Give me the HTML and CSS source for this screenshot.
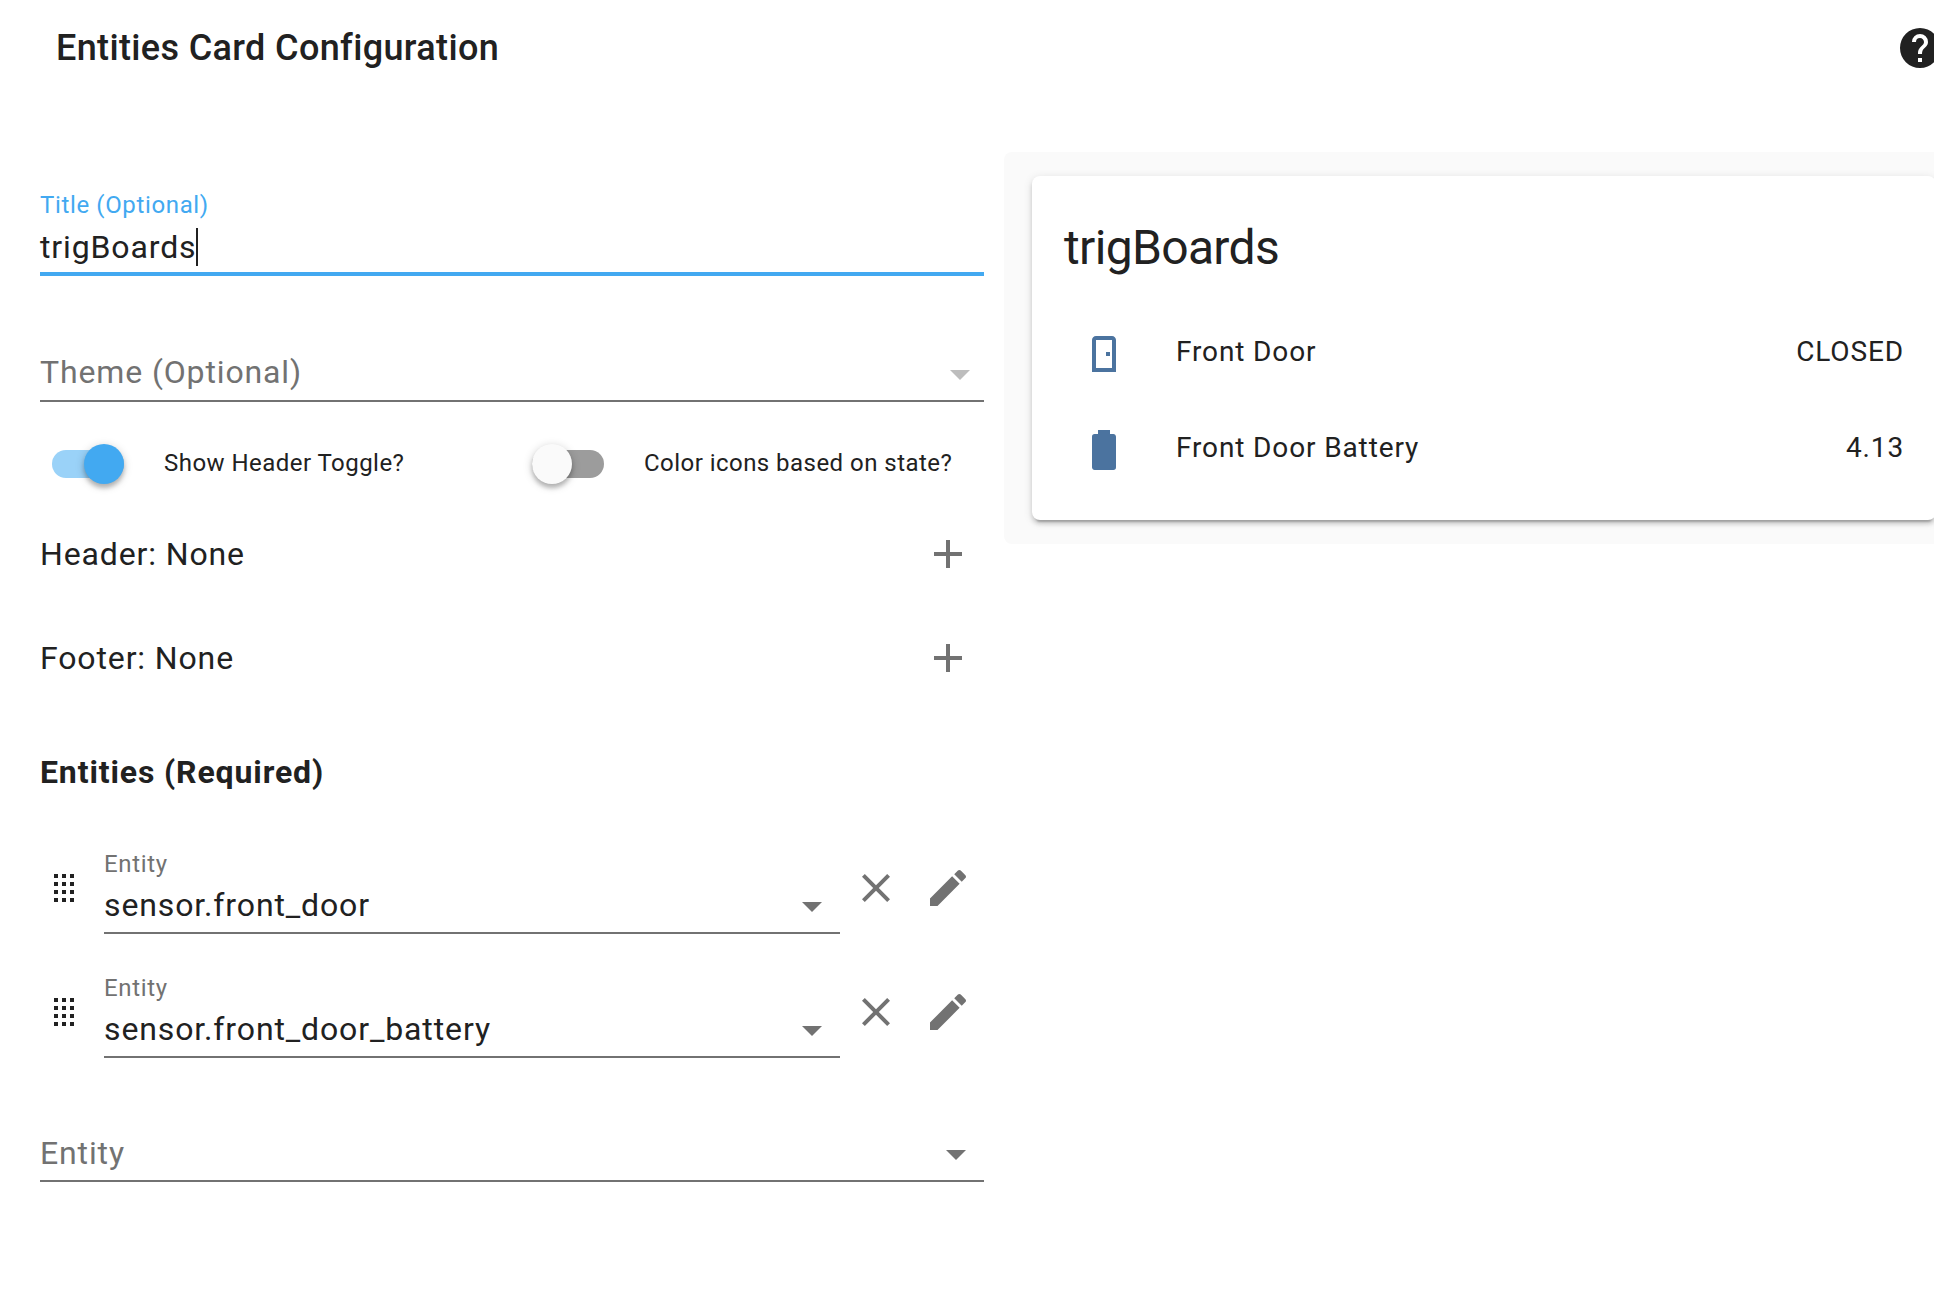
FILE: index.html
```html
<!DOCTYPE html>
<html lang="en">
<head>
<meta charset="utf-8">
<title>Entities Card Configuration</title>
<link rel="stylesheet" href="styles.css">
</head>
<body>
<header class="dialog-header">
  <h1 class="dialog-title">Entities Card Configuration</h1>
  <svg class="icon help" viewBox="0 0 24 24"><path d="M15.07,11.25L14.17,12.17C13.45,12.89 13,13.5 13,15H11V14.5C11,13.39 11.45,12.39 12.17,11.67L13.41,10.41C13.78,10.05 14,9.55 14,9C14,7.89 13.1,7 12,7A2,2 0 0,0 10,9H8A4,4 0 0,1 12,5A4,4 0 0,1 16,9C16,9.88 15.64,10.67 15.07,11.25M13,19H11V17H13M12,2A10,10 0 0,0 2,12A10,10 0 0,0 12,22A10,10 0 0,0 22,12C22,6.47 17.5,2 12,2Z"/></svg>
</header>
<main class="content">
  <section class="editor">
    <div class="field field-title">
      <div class="label">Title (Optional)</div>
      <div class="input">trigBoards<span class="caret"></span></div>
    </div>
    <div class="select select-theme">
      <span class="placeholder">Theme (Optional)</span>
      <svg class="icon arrow" viewBox="0 0 24 24"><path d="M7,10L12,15L17,10H7Z"/></svg>
    </div>
    <div class="toggles">
      <div class="toggle">
        <span class="switch on"><span class="knob"></span></span>
        <span class="toggle-label">Show Header Toggle?</span>
      </div>
      <div class="toggle">
        <span class="switch"><span class="knob"></span></span>
        <span class="toggle-label">Color icons based on state?</span>
      </div>
    </div>
    <div class="add-row">
      <span>Header: None</span>
      <svg class="icon" viewBox="0 0 24 24"><path d="M19,13H13V19H11V13H5V11H11V5H13V11H19V13Z"/></svg>
    </div>
    <div class="add-row">
      <span>Footer: None</span>
      <svg class="icon" viewBox="0 0 24 24"><path d="M19,13H13V19H11V13H5V11H11V5H13V11H19V13Z"/></svg>
    </div>
    <h3 class="section-title">Entities (Required)</h3>
    <div class="entities">
      <div class="entity">
        <svg class="icon drag" viewBox="0 0 24 24"><path d="M7,19V17H9V19H7M11,19V17H13V19H11M15,19V17H17V19H15M7,15V13H9V15H7M11,15V13H13V15H11M15,15V13H17V15H15M7,11V9H9V11H7M11,11V9H13V11H11M15,11V9H17V11H15M7,7V5H9V7H7M11,7V5H13V7H11M15,7V5H17V7H15Z"/></svg>
        <div class="field picker">
          <div class="label">Entity</div>
          <div class="picker-line">
            <span class="value">sensor.front_door</span>
            <svg class="icon arrow" viewBox="0 0 24 24"><path d="M7,10L12,15L17,10H7Z"/></svg>
          </div>
        </div>
        <svg class="icon remove" viewBox="0 0 24 24"><path d="M19,6.41L17.59,5L12,10.59L6.41,5L5,6.41L10.59,12L5,17.59L6.41,19L12,13.41L17.59,19L19,17.59L13.41,12L19,6.41Z"/></svg>
        <svg class="icon edit" viewBox="0 0 24 24"><path d="M20.71,7.04C21.1,6.65 21.1,6 20.71,5.63L18.37,3.29C18,2.9 17.35,2.9 16.96,3.29L15.12,5.12L18.87,8.87M3,17.25V21H6.75L17.81,9.93L14.06,6.18L3,17.25Z"/></svg>
      </div>
      <div class="entity">
        <svg class="icon drag" viewBox="0 0 24 24"><path d="M7,19V17H9V19H7M11,19V17H13V19H11M15,19V17H17V19H15M7,15V13H9V15H7M11,15V13H13V15H11M15,15V13H17V15H15M7,11V9H9V11H7M11,11V9H13V11H11M15,11V9H17V11H15M7,7V5H9V7H7M11,7V5H13V7H11M15,7V5H17V7H15Z"/></svg>
        <div class="field picker">
          <div class="label">Entity</div>
          <div class="picker-line">
            <span class="value">sensor.front_door_battery</span>
            <svg class="icon arrow" viewBox="0 0 24 24"><path d="M7,10L12,15L17,10H7Z"/></svg>
          </div>
        </div>
        <svg class="icon remove" viewBox="0 0 24 24"><path d="M19,6.41L17.59,5L12,10.59L6.41,5L5,6.41L10.59,12L5,17.59L6.41,19L12,13.41L17.59,19L19,17.59L13.41,12L19,6.41Z"/></svg>
        <svg class="icon edit" viewBox="0 0 24 24"><path d="M20.71,7.04C21.1,6.65 21.1,6 20.71,5.63L18.37,3.29C18,2.9 17.35,2.9 16.96,3.29L15.12,5.12L18.87,8.87M3,17.25V21H6.75L17.81,9.93L14.06,6.18L3,17.25Z"/></svg>
      </div>
    </div>
    <div class="select select-entity">
      <span class="placeholder">Entity</span>
      <svg class="icon arrow" viewBox="0 0 24 24"><path d="M7,10L12,15L17,10H7Z"/></svg>
    </div>
  </section>
  <aside class="preview">
    <div class="card">
      <h2 class="card-title">trigBoards</h2>
      <div class="state">
        <svg class="icon" viewBox="0 0 24 24"><path d="M8,3C6.89,3 6,3.89 6,5V21H18V5C18,3.89 17.11,3 16,3H8M8,5H16V19H8V5M13,11V13H15V11H13Z"/></svg>
        <span class="name">Front Door</span>
        <span class="reading">CLOSED</span>
      </div>
      <div class="state">
        <svg class="icon" viewBox="0 0 24 24"><path d="M16.67,4H15V2H9V4H7.33A1.33,1.33 0 0,0 6,5.33V20.67C6,21.4 6.6,22 7.33,22H16.67A1.33,1.33 0 0,0 18,20.67V5.33C18,4.6 17.4,4 16.67,4Z"/></svg>
        <span class="name">Front Door Battery</span>
        <span class="reading">4.13</span>
      </div>
    </div>
  </aside>
</main>
</body>
</html>
```
FILE: styles.css
```css
* {
  box-sizing: border-box;
}

body {
  margin: 0;
  height: 1296px;
  overflow: hidden;
  background: #fff;
  color: #212121;
  font: 400 32px/40px Roboto, "Liberation Sans", sans-serif;
  letter-spacing: 0.87px;
  white-space: nowrap;
}

h1, h2, h3 {
  margin: 0;
}

.icon {
  display: block;
  flex: none;
  width: 48px;
  height: 48px;
  fill: #727272;
}

.dialog-header {
  display: flex;
  align-items: center;
  justify-content: space-between;
  width: 1944px;
  height: 96px;
  padding-left: 56px;
}

.dialog-title {
  font-size: 36px;
  font-weight: 500;
  line-height: 48px;
  letter-spacing: 0.36px;
}

.help {
  fill: #212121;
}

.content {
  display: flex;
  align-items: flex-start;
  gap: 20px;
  width: 1964px;
  padding-left: 40px;
}

.editor {
  flex: none;
  width: 944px;
  padding-top: 88px;
}

.label {
  font-size: 24px;
  line-height: 40px;
  letter-spacing: 0.64px;
  color: #727272;
}

.field-title {
  border-bottom: 4px solid #42a9f1;
}

.field-title .label {
  height: 40px;
  line-height: 42px;
  color: #42a9f1;
}

.input {
  display: flex;
  height: 48px;
  line-height: 46px;
}

.caret {
  width: 2px;
  height: 38px;
  margin-top: 4px;
  background: #212121;
}

.select {
  display: flex;
  align-items: flex-end;
  justify-content: space-between;
  border-bottom: 2px solid #727272;
  color: #727272;
}

.select .arrow,
.picker .arrow {
  margin-bottom: 2px;
}

.placeholder {
  align-self: flex-start;
  line-height: 48px;
}

.select-theme {
  height: 54px;
  margin-top: 72px;
}

.select-theme .arrow {
  fill: #bdbdbd;
}

.select-entity {
  height: 53px;
  margin-top: 71px;
  padding-right: 4px;
}

.toggles {
  display: grid;
  grid-template-columns: 480px 1fr;
  height: 100px;
  padding-top: 24px;
}

.toggle {
  display: flex;
  align-items: center;
  gap: 40px;
  padding-left: 12px;
}

.toggle-label {
  padding-bottom: 2px;
  font-size: 24px;
  line-height: 28px;
  letter-spacing: 0.46px;
}

.switch {
  display: flex;
  align-items: center;
  width: 72px;
  height: 28px;
  border-radius: 14px;
  background: #9c9c9c;
}

.knob {
  flex: none;
  width: 40px;
  height: 40px;
  border-radius: 50%;
  background: #fafafa;
  box-shadow: 0 2px 10px rgba(0, 0, 0, 0.2), 0 4px 4px rgba(0, 0, 0, 0.2);
}

.switch.on {
  justify-content: flex-end;
  background: #9ad2f8;
}

.switch.on .knob {
  background: #42a9f1;
}

.add-row {
  display: flex;
  align-items: center;
  justify-content: space-between;
  height: 104px;
  padding-right: 12px;
}

.section-title {
  margin-top: 42px;
  font-size: 32px;
  font-weight: 700;
}

.entities {
  display: grid;
  gap: 34px;
  margin-top: 52px;
}

.entity {
  display: flex;
  align-items: flex-start;
}

.entity > .icon {
  margin-top: 20px;
}

.drag {
  fill: #212121;
}

.picker {
  width: 736px;
  margin: 0 12px 0 16px;
  border-bottom: 2px solid #727272;
}

.picker-line {
  display: flex;
  align-items: flex-end;
  justify-content: space-between;
  height: 48px;
  padding-right: 4px;
}

.value {
  align-self: flex-start;
  line-height: 42px;
}

.edit {
  margin-left: 24px;
}

.preview {
  flex: 1;
  height: 392px;
  margin-top: 56px;
  padding: 24px 24px 24px 28px;
  border-radius: 8px;
  background: #fafafa;
}

.card {
  width: 904px;
  height: 344px;
  padding: 24px 32px 0;
  border-radius: 8px;
  background: #fff;
  box-shadow: 0 4px 4px rgba(0, 0, 0, 0.14), 0 2px 10px rgba(0, 0, 0, 0.12), 0 6px 2px -4px rgba(0, 0, 0, 0.2);
}

.card-title {
  height: 130px;
  font-size: 48px;
  font-weight: 400;
  line-height: 96px;
  letter-spacing: -0.66px;
}

.state {
  display: flex;
  height: 96px;
  padding-left: 16px;
  font-size: 28px;
  line-height: 43px;
}

.state .icon {
  fill: #4b739f;
}

.name {
  margin-left: 48px;
}

.reading {
  margin-left: auto;
}
```
